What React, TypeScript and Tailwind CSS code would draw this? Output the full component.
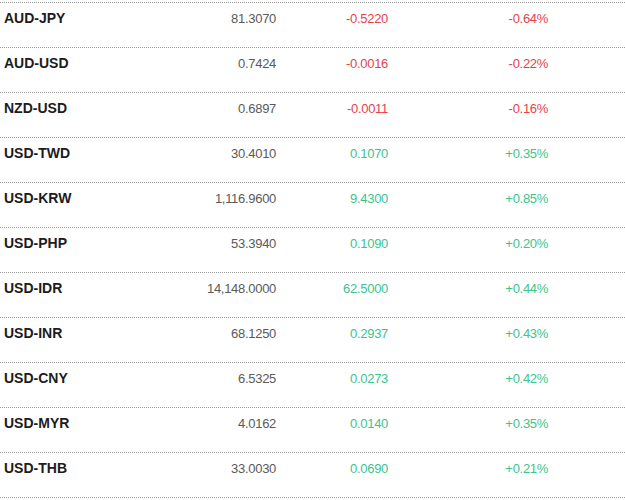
const rows = [
  { sym: "AUD-JPY", price: "81.3070", chg: "-0.5220", pct: "-0.64%" },
  { sym: "AUD-USD", price: "0.7424", chg: "-0.0016", pct: "-0.22%" },
  { sym: "NZD-USD", price: "0.6897", chg: "-0.0011", pct: "-0.16%" },
  { sym: "USD-TWD", price: "30.4010", chg: "0.1070", pct: "+0.35%" },
  { sym: "USD-KRW", price: "1,116.9600", chg: "9.4300", pct: "+0.85%" },
  { sym: "USD-PHP", price: "53.3940", chg: "0.1090", pct: "+0.20%" },
  { sym: "USD-IDR", price: "14,148.0000", chg: "62.5000", pct: "+0.44%" },
  { sym: "USD-INR", price: "68.1250", chg: "0.2937", pct: "+0.43%" },
  { sym: "USD-CNY", price: "6.5325", chg: "0.0273", pct: "+0.42%" },
  { sym: "USD-MYR", price: "4.0162", chg: "0.0140", pct: "+0.35%" },
  { sym: "USD-THB", price: "33.0030", chg: "0.0690", pct: "+0.21%" },
];

export default function App() {
  return (
    <div className="w-[625px] h-[500px] bg-white pt-[2px] font-['Liberation_Sans',Arial,sans-serif]">
      {rows.map((r) => {
        const down = r.chg.startsWith("-");
        const color = down ? "text-[#e5424d]" : "text-[#3dc48d]";
        return (
          <div
            key={r.sym}
            className="grid grid-cols-[180px_96px_112px_160px_1fr] items-baseline h-[45px] border-t border-dotted border-[#9a9a9a] pt-[7px] leading-[16px]"
          >
            <div className="pl-[4px] text-[14px] font-bold text-[#1c1c1c]">{r.sym}</div>
            <div className="text-right text-[13px] text-[#5a5a5a] tracking-[-0.3px]">{r.price}</div>
            <div className={`text-right text-[13px] tracking-[-0.3px] ${color}`}>{r.chg}</div>
            <div className={`text-right text-[13px] tracking-[-0.3px] ${color}`}>{r.pct}</div>
            <div />
          </div>
        );
      })}
      <div className="border-t border-dotted border-[#9a9a9a]" />
    </div>
  );
}
